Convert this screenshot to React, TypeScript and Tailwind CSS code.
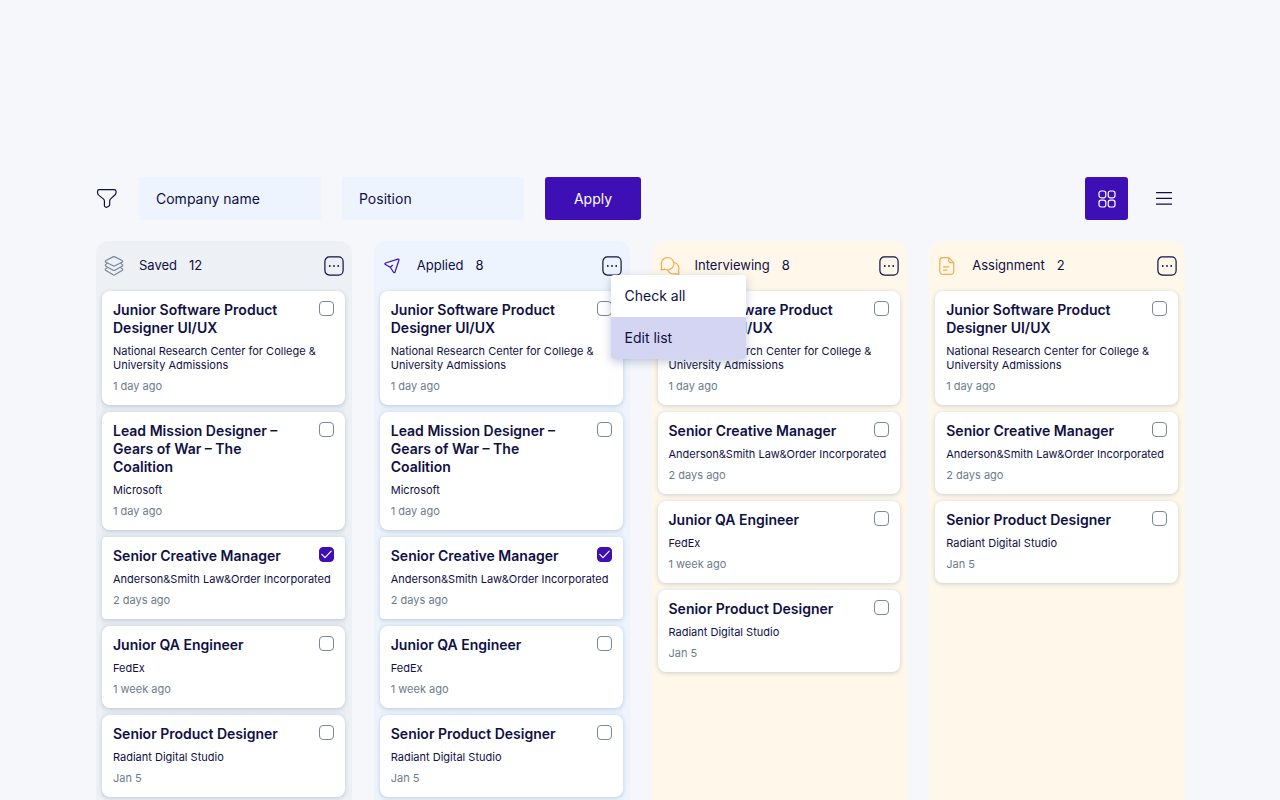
import { useState } from 'react';
import type { ReactNode } from 'react';

interface Job {
  title: string;
  company: string;
  date: string;
  checked?: boolean;
}

interface Column {
  name: string;
  count: number;
  icon: ReactNode;
  bg: string;
  listBg: string;
  jobs: Job[];
}

const stroke = {
  fill: 'none',
  stroke: 'currentColor',
  strokeLinecap: 'round',
  strokeLinejoin: 'round',
} as const;

function FilterIcon() {
  return (
    <svg viewBox="0 0 22 22" className="h-[22px] w-[22px]" strokeWidth="1.2" {...stroke}>
      <path d="M3.1 1.7h15.200c1 0 1.700.7 1.700 1.600v1.500c0 .7-.5 1.500-.9 2l-4.500 4.100c-.6.500-.9 1.300-.9 2v3.500c0 .6-.4 1.300-.8 1.700l-1.500.9c-1.300.8-3-.1-3-1.600v-4.500c0-.7-.4-1.400-.8-1.800L2.400 6.900c-.5-.5-.8-1.300-.8-1.900V3.300c0-.9.600-1.600 1.500-1.600z" />
    </svg>
  );
}

function LayersIcon() {
  return (
    <svg viewBox="0 0 20 20" className="h-5 w-5 text-[#758797]" strokeWidth="1.2" {...stroke}>
      <path d="M9.100.9 2 4.500c-1 .5-1 1.300 0 1.800l7.100 3.500c.6.300 1.200.3 1.800 0L18 6.300c1-.5 1-1.300 0-1.800L10.900.9c-.6-.3-1.200-.3-1.800 0z" />
      <path d="M3 7.600 2 8.200c-1 .5-1 1.500 0 2l7.100 4c.6.300 1.200.3 1.800 0l7.100-4c1-.5 1-1.500 0-2l-1-.6" />
      <path d="M3 11.900l-1 .6c-1 .5-1 1.500 0 2l7.100 4.300c.6.300 1.200.3 1.800 0l7.100-4.300c1-.5 1-1.500 0-2l-1-.6" />
    </svg>
  );
}

function PlaneIcon() {
  return (
    <svg viewBox="0 0 20 20" className="h-5 w-5 text-[#3d0fb5]" strokeWidth="1.2" {...stroke}>
      <path d="M15.900 3.100 3.500 7c-.8.300-.9 1.100-.1 1.500l4.900 2.700 3.200 5c.5.700 1.300.7 1.500-.2L16.900 4.200c.2-.8-.3-1.300-1-1.100z" />
      <path d="m8.300 11.200 2.200-1.900" />
    </svg>
  );
}

function ChatIcon() {
  return (
    <svg viewBox="0 0 20 20" className="h-5 w-5 text-[#f2ae4c]" strokeWidth="1.2" {...stroke}>
      <path d="M7.500 1.500a6.200 6.200 0 0 0-5.700 8.700l-.6 3c-.1.500.3.800.7.700l2.900-.7A6.200 6.200 0 1 0 7.500 1.500z" />
      <path d="M14.400 6.500a6 6 0 0 1 4 8.200l.6 2.900c.1.500-.3.900-.8.700l-2.800-.7a6 6 0 0 1-7.600-3.300" />
    </svg>
  );
}

function DocumentIcon() {
  return (
    <svg viewBox="0 0 20 20" className="h-5 w-5 text-[#f2ae4c]" strokeWidth="1.2" {...stroke}>
      <path d="M11.700 1.600H6.300c-2.200 0-3.500 1.300-3.500 3.500v9.800c0 2.200 1.300 3.500 3.500 3.500h6.900c2.200 0 3.500-1.300 3.500-3.500V6.600z" />
      <path d="M11.700 1.600v2.700c0 1.500.8 2.300 2.300 2.300h2.700M6.500 10.800h5.500M6.500 14.200h3.500" />
    </svg>
  );
}

function MoreIcon() {
  return (
    <svg viewBox="0 0 20 20" className="h-5 w-5" strokeWidth="1.2" {...stroke}>
      <rect x=".9" y=".9" width="18.200" height="18.200" rx="4.500" />
      <path strokeWidth="1.800" d="M5.800 10h.01M10 10h.01M14.200 10h.01" />
    </svg>
  );
}

function GridIcon() {
  return (
    <svg viewBox="0 0 18 18" className="h-[18px] w-[18px]" strokeWidth="1.2" {...stroke}>
      <rect x="1" y="1" width="6.800" height="6.800" rx="2.200" />
      <rect x="10.200" y="1" width="6.800" height="6.800" rx="2.200" />
      <rect x="1" y="10.200" width="6.800" height="6.800" rx="2.200" />
      <rect x="10.200" y="10.200" width="6.800" height="6.800" rx="2.200" />
    </svg>
  );
}

function ListIcon() {
  return (
    <svg viewBox="0 0 18 18" className="h-[18px] w-[18px]" strokeWidth="1.2" {...stroke}>
      <path d="M1.500 2.600h15M1.500 8.400h15M1.500 14.200h15" />
    </svg>
  );
}

const softwareDesigner: Job = {
  title: 'Junior Software Product Designer UI/UX',
  company: 'National Research Center for College & University Admissions',
  date: '1 day ago',
};
const missionDesigner: Job = {
  title: 'Lead Mission Designer – Gears of War – The Coalition',
  company: 'Microsoft',
  date: '1 day ago',
};
const creativeManager: Job = {
  title: 'Senior Creative Manager',
  company: 'Anderson&Smith Law&Order Incorporated',
  date: '2 days ago',
};
const qaEngineer: Job = { title: 'Junior QA Engineer', company: 'FedEx', date: '1 week ago' };
const productDesigner: Job = {
  title: 'Senior Product Designer',
  company: 'Radiant Digital Studio',
  date: 'Jan 5',
};

const columns: Column[] = [
  {
    name: 'Saved',
    count: 12,
    icon: <LayersIcon />,
    bg: 'bg-[#edf1f5]',
    listBg: 'bg-[#e8edf2]',
    jobs: [
      softwareDesigner,
      missionDesigner,
      { ...creativeManager, checked: true },
      qaEngineer,
      productDesigner,
    ],
  },
  {
    name: 'Applied',
    count: 8,
    icon: <PlaneIcon />,
    bg: 'bg-[#edf4fd]',
    listBg: 'bg-[#e9f2fc]',
    jobs: [
      softwareDesigner,
      missionDesigner,
      { ...creativeManager, checked: true },
      qaEngineer,
      productDesigner,
    ],
  },
  {
    name: 'Interviewing',
    count: 8,
    icon: <ChatIcon />,
    bg: 'bg-[#fef7ea]',
    listBg: '',
    jobs: [softwareDesigner, creativeManager, qaEngineer, productDesigner],
  },
  {
    name: 'Assignment',
    count: 2,
    icon: <DocumentIcon />,
    bg: 'bg-[#fef7ea]',
    listBg: '',
    jobs: [softwareDesigner, creativeManager, productDesigner],
  },
];

function JobCard({ job }: { job: Job }) {
  const [checked, setChecked] = useState(!!job.checked);

  return (
    <li
      className={`relative bg-white px-[11px] pt-[10px] pb-3 shadow-[0_1px_4px_rgba(60,80,120,0.25)] ${
        checked ? 'rounded-sm' : 'rounded-lg'
      }`}
    >
      <h3 className="pr-10 text-[14px] leading-[18px] font-semibold">{job.title}</h3>
      <p className="mt-[7px] text-[11px] leading-[14px]">{job.company}</p>
      <p className="mt-[7px] text-[11px] leading-[14px] text-[#6b7c8c]">{job.date}</p>
      <label className="absolute top-[10px] right-[11px] h-[15px] w-[15px]">
        <input
          type="checkbox"
          aria-label={job.title}
          checked={checked}
          onChange={(e) => setChecked(e.target.checked)}
          className="block h-[15px] w-[15px] appearance-none rounded border border-[#7b8896] bg-white checked:border-[#3d0fb5] checked:bg-[#3d0fb5]"
        />
        {checked && (
          <svg
            viewBox="0 0 15 15"
            className="pointer-events-none absolute inset-0 h-[15px] w-[15px] text-white"
            strokeWidth="1.2"
            {...stroke}
          >
            <path d="m2.800 7.300 3.200 3.300 6.200-6.400" />
          </svg>
        )}
      </label>
    </li>
  );
}

function BoardColumn({
  column,
  menuOpen,
  onToggleMenu,
}: {
  column: Column;
  menuOpen: boolean;
  onToggleMenu: () => void;
}) {
  return (
    <section className={`rounded-t-xl pr-[7px] pl-[6px] ${column.bg}`}>
      <header className="flex h-[50px] items-center pr-px pl-[2px] text-[13px]">
        {column.icon}
        <h2 className="ml-[15px]">{column.name}</h2>
        <span className="ml-3">{column.count}</span>
        <div className="relative ml-auto">
          <button type="button" aria-label={`${column.name} options`} onClick={onToggleMenu} className="block">
            <MoreIcon />
          </button>
          {menuOpen && (
            <div className="absolute top-[19px] left-[9px] z-10 flex w-[135px] flex-col overflow-hidden rounded-[3px] bg-white text-sm shadow-[0_3px_10px_rgba(60,80,130,0.3)]">
              <button type="button" className="h-[42px] px-[14px] text-left">
                Check all
              </button>
              <button type="button" className="h-[42px] bg-[#d3d5f3] px-[14px] text-left">
                Edit list
              </button>
            </div>
          )}
        </div>
      </header>
      <ul className={`flex flex-col gap-[7px] rounded-t-lg ${column.listBg}`}>
        {column.jobs.map((job) => (
          <JobCard key={job.title} job={job} />
        ))}
      </ul>
    </section>
  );
}

export default function App() {
  const [openMenu, setOpenMenu] = useState<string | null>('Applied');

  return (
    <main className="flex min-h-screen flex-col bg-[#f5f7fb] pt-[177px] pr-[95px] pl-24 font-['Inter',sans-serif] text-[#0f1043]">
      <div className="flex items-center">
        <form className="flex items-center gap-[21px]" onSubmit={(e) => e.preventDefault()}>
          <FilterIcon />
          <input
            type="text"
            aria-label="Company name"
            placeholder="Company name"
            className="h-[43px] w-[182px] rounded-[3px] bg-[#edf4fd] px-[17px] text-sm placeholder:text-[#0f1043] focus:outline-none"
          />
          <input
            type="text"
            aria-label="Position"
            placeholder="Position"
            className="h-[43px] w-[182px] rounded-[3px] bg-[#edf4fd] px-[17px] text-sm placeholder:text-[#0f1043] focus:outline-none"
          />
          <button type="submit" className="h-[43px] w-24 rounded-[3px] bg-[#3d0fb5] text-sm text-white">
            Apply
          </button>
        </form>
        <div className="ml-auto flex gap-[14px]">
          <button
            type="button"
            aria-label="Board view"
            className="flex h-[43px] w-[43px] items-center justify-center rounded-[3px] bg-[#3d0fb5] text-white"
          >
            <GridIcon />
          </button>
          <button type="button" aria-label="List view" className="flex h-[43px] w-[43px] items-center justify-center">
            <ListIcon />
          </button>
        </div>
      </div>

      <div className="mt-[21px] grid flex-1 grid-cols-4 gap-[22px]">
        {columns.map((column) => (
          <BoardColumn
            key={column.name}
            column={column}
            menuOpen={openMenu === column.name}
            onToggleMenu={() => setOpenMenu(openMenu === column.name ? null : column.name)}
          />
        ))}
      </div>
    </main>
  );
}
